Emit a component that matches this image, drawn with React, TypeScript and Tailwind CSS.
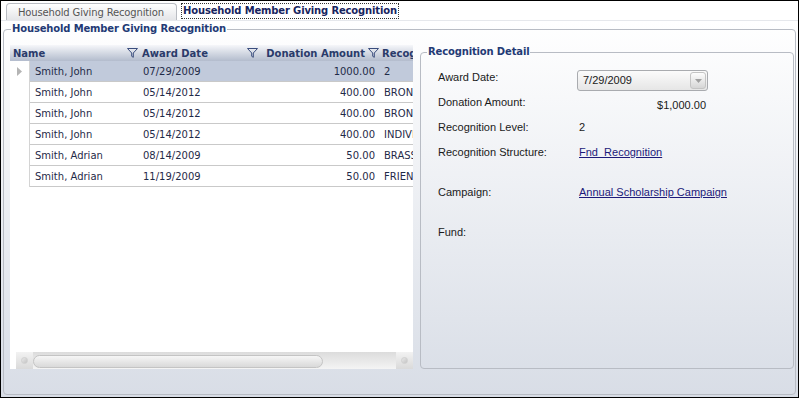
import React from 'react';

const rows = [
  { name: 'Smith, John', date: '07/29/2009', amount: '1000.00', level: '2' },
  { name: 'Smith, John', date: '05/14/2012', amount: '400.00', level: 'BRONZE' },
  { name: 'Smith, John', date: '05/14/2012', amount: '400.00', level: 'BRONZE' },
  { name: 'Smith, John', date: '05/14/2012', amount: '400.00', level: 'INDIVIDUAL' },
  { name: 'Smith, Adrian', date: '08/14/2009', amount: '50.00', level: 'BRASS' },
  { name: 'Smith, Adrian', date: '11/19/2009', amount: '50.00', level: 'FRIEND' },
];

const Funnel: React.FC = () => (
  <svg width="11" height="10" viewBox="0 0 11 10" className="shrink-0">
    <path d="M0.5 0.5 H10.5 L6.3 5 V9.3 L4.7 8.3 V5 Z" fill="none" stroke="#3a4d7d" strokeWidth="1" strokeLinejoin="round" />
  </svg>
);

const App: React.FC = () => {
  return (
    <div className="w-[799px] h-[398px] border border-black bg-white flex flex-col overflow-hidden font-['DejaVu_Sans',sans-serif]">
      {/* tabs */}
      <div className="h-[20px] shrink-0 flex items-end pl-[5px] border-b border-[#e6e8ec]">
        <div className="h-[17px] w-[171px] rounded-t-[4px] border border-b-0 border-[#b9bcc2] bg-gradient-to-b from-white to-[#e4e5e8] text-[10px] text-[#555] flex items-center pl-[11px] tracking-[-0.15px]">
          Household Giving Recognition
        </div>
        <div className="h-[18px] ml-[3px] bg-white flex items-center px-[1px]">
          <span className="border border-dotted border-[#333] h-[16px] leading-[14px] px-[1px] text-[10px] font-bold text-[#17245e] tracking-[-0.15px]">
            Household Member Giving Recognition
          </span>
        </div>
      </div>

      {/* content */}
      <div className="flex-1 bg-gradient-to-b from-white to-[#d8dde6] px-[2px] pt-[1px]">
        <fieldset className="border border-[#b8bcc4] rounded-[4px] pl-[6px] pr-[1px] pt-[9px] pb-[25px]">
          <legend className="ml-[1px] px-[1px] text-[10px] font-bold text-[#233a75] leading-[14px] tracking-[-0.15px]">
            Household Member Giving Recognition
          </legend>
          <div className="flex h-[324px] gap-[7px]">
            {/* grid */}
            <div className="w-[403px] shrink-0 bg-white flex flex-col overflow-hidden">
              <div className="h-[16px] flex items-center bg-gradient-to-b from-[#f6f7fa] to-[#b3bccd] text-[10px] font-bold text-[#2a3b6a] whitespace-nowrap">
                <div className="w-[130px] flex items-center justify-between pl-[3px] pr-[2px]">
                  <span>Name</span>
                  <Funnel />
                </div>
                <div className="w-[122px] flex items-center justify-between pl-[2px] pr-[4px]">
                  <span>Award Date</span>
                  <Funnel />
                </div>
                <div className="w-[118px] flex items-center justify-end gap-[3px] pr-[1px]">
                  <span>Donation Amount</span>
                  <Funnel />
                </div>
                <div className="flex-1 pl-[2px] overflow-hidden">Recognition Level</div>
              </div>
              {rows.map((r, i) => (
                <div key={i} className="h-[21px] flex text-[10px] text-[#1f2a48] whitespace-nowrap">
                  <div className="w-[20px] shrink-0 border-r border-[#d4d4d4] flex items-center justify-center">
                    {i === 0 && (
                      <svg width="5" height="9" viewBox="0 0 5 9">
                        <path d="M0 0 L5 4.5 L0 9 Z" fill="#b4b4b4" />
                      </svg>
                    )}
                  </div>
                  <div className={`flex-1 flex items-center border-b border-[#c9c9c9] ${i === 0 ? 'bg-[#c1cadb]' : ''}`}>
                    <div className="w-[110px] pl-[5px]">{r.name}</div>
                    <div className="w-[122px] pl-[3px]">{r.date}</div>
                    <div className="w-[118px] text-right pr-[5px]">{r.amount}</div>
                    <div className="flex-1 pl-[4px] overflow-hidden">{r.level}</div>
                  </div>
                </div>
              ))}
              <div className="flex-1" />
              {/* horizontal scrollbar */}
              <div className="h-[17px] ml-[6px] flex items-stretch bg-gradient-to-b from-[#dcdcdc] to-[#f4f4f4]">
                <div className="w-[17px] flex items-center justify-center bg-gradient-to-b from-[#f2f2f2] to-[#dadada]">
                  <div className="w-[7px] h-[7px] rounded-full bg-gradient-to-br from-[#e8e8e8] to-[#c4c4c4] border border-[#d0d0d0]" />
                </div>
                <div className="flex-1 pt-[3px] pb-[1px]">
                  <div className="w-[290px] h-full rounded-full border border-[#c4c4c4] bg-gradient-to-b from-[#f6f6f6] to-[#d9d9d9]" />
                </div>
                <div className="w-[17px] flex items-center justify-center bg-gradient-to-b from-[#f2f2f2] to-[#dadada]">
                  <div className="w-[7px] h-[7px] rounded-full bg-gradient-to-br from-[#e8e8e8] to-[#c4c4c4] border border-[#d0d0d0]" />
                </div>
              </div>
            </div>

            {/* detail */}
            <fieldset className="flex-1 border border-[#b8bcc4] rounded-[4px] pl-[17px] pt-[11px] font-['Liberation_Sans',Arial,sans-serif] text-[11px] text-[#1a1a1a]">
              <legend className="-ml-[11px] px-[1px] font-['DejaVu_Sans',sans-serif] text-[10px] font-bold text-[#233a75] leading-[14px] tracking-[-0.15px]">
                Recognition Detail
              </legend>
              <div className="h-[25px] flex items-start">
                <div className="w-[139px] leading-[13px] pt-[1px]">Award Date:</div>
                <div className="w-[131px] h-[21px] border border-[#a9abaf] rounded-[3px] bg-gradient-to-b from-[#fbfbfb] to-[#e6e6e6] flex items-center justify-between pl-[5px] pr-[1px] text-[#1a1a1a]">
                  <span>7/29/2009</span>
                  <div className="w-[16px] h-[17px] rounded-[3px] border border-[#c4c4c4] bg-gradient-to-b from-[#fdfdfd] to-[#d6d6d6] flex items-center justify-center">
                    <svg width="7" height="4" viewBox="0 0 7 4">
                      <path d="M0 0 H7 L3.5 4 Z" fill="#a0a0a0" />
                    </svg>
                  </div>
                </div>
              </div>
              <div className="h-[25px] flex items-start">
                <div className="w-[141px] leading-[13px] pt-[1px]">Donation Amount:</div>
                <div className="w-[127px] text-right leading-[13px] pt-[4px]">$1,000.00</div>
              </div>
              <div className="h-[25px] flex items-start">
                <div className="w-[141px] leading-[13px] pt-[1px]">Recognition Level:</div>
                <div className="leading-[13px] pt-[1px]">2</div>
              </div>
              <div className="h-[40px] flex items-start">
                <div className="w-[141px] leading-[13px] pt-[1px]">Recognition Structure:</div>
                <a className="leading-[13px] pt-[1px] text-[#1c1a7a] underline">Fnd_Recognition</a>
              </div>
              <div className="h-[40px] flex items-start">
                <div className="w-[141px] leading-[13px] pt-[1px]">Campaign:</div>
                <a className="leading-[13px] pt-[1px] text-[#1c1a7a] underline">Annual Scholarship Campaign</a>
              </div>
              <div className="h-[25px] flex items-start">
                <div className="w-[141px] leading-[13px] pt-[1px]">Fund:</div>
              </div>
            </fieldset>
          </div>
        </fieldset>
      </div>
    </div>
  );
};

export default App;
